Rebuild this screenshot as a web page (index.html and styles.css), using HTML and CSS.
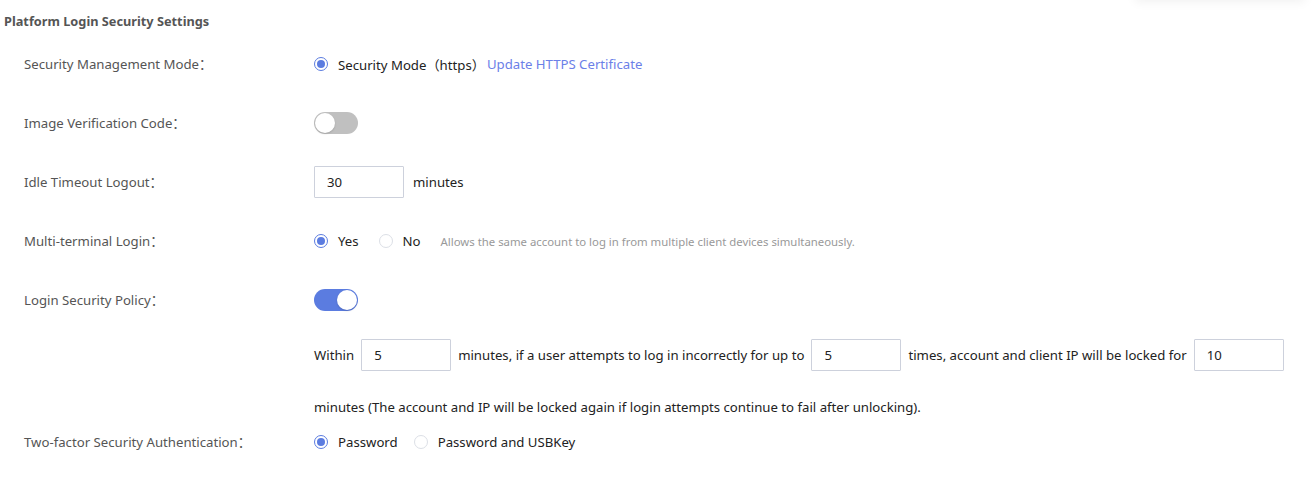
FILE: index.html
```html
<!DOCTYPE html>
<html lang="en">
<head>
<meta charset="utf-8">
<title>Platform Login Security Settings</title>
<link rel="stylesheet" href="styles.css">
</head>
<body>
<div class="top-shadow"></div>
<div class="page">
  <div class="title">Platform Login Security Settings</div>
  <div class="form">
    <div class="item">
      <div class="label">Security Management Mode：</div>
      <div class="content">
        <label class="radio checked"><span class="dot"></span>Security Mode（https）</label>
        <a class="link" href="#">Update HTTPS Certificate</a>
      </div>
    </div>
    <div class="item">
      <div class="label">Image Verification Code：</div>
      <div class="content"><span class="switch"><span class="knob"></span></span></div>
    </div>
    <div class="item">
      <div class="label">Idle Timeout Logout：</div>
      <div class="content">
        <input class="input" value="30">
        <span class="unit">minutes</span>
      </div>
    </div>
    <div class="item">
      <div class="label">Multi-terminal Login：</div>
      <div class="content">
        <label class="radio checked"><span class="dot"></span>Yes</label>
        <label class="radio"><span class="dot"></span>No</label>
        <span class="hint">Allows the same account to log in from multiple client devices simultaneously.</span>
      </div>
    </div>
    <div class="item item-policy">
      <div class="label">Login Security Policy：</div>
      <div class="content-col">
        <div class="content"><span class="switch on"><span class="knob"></span></span></div>
        <div class="lockout">
          <span>Within</span>
          <input class="input" value="5">
          <span>minutes, if a user attempts to log in incorrectly for up to</span>
          <input class="input" value="5">
          <span>times, account and client IP will be locked for</span>
          <input class="input" value="10">
          <span>minutes (The account and IP will be locked again if login attempts continue to fail after unlocking).</span>
        </div>
      </div>
    </div>
    <div class="item">
      <div class="label">Two-factor Security Authentication：</div>
      <div class="content">
        <label class="radio checked tight"><span class="dot"></span>Password</label>
        <label class="radio"><span class="dot"></span>Password and USBKey</label>
      </div>
    </div>
  </div>
</div>
</body>
</html>
```

FILE: styles.css
```css
html, body {
  margin: 0;
  padding: 0;
  background: #fff;
}
body {
  font-family: "Noto Sans", "Noto Sans CJK SC", sans-serif;
  font-size: 13.2px;
  color: #333;
  position: relative;
  overflow: hidden;
  height: 479px;
}
.top-shadow {
  position: absolute;
  top: -40px;
  right: 10px;
  width: 170px;
  height: 40px;
  box-shadow: 0 2px 10px rgba(0, 0, 0, 0.06);
  background: #fff;
}
.page {
  padding: 0 0 0 4px;
}
.title {
  height: 42px;
  line-height: 42px;
  font-weight: 700;
  color: #555;
  font-size: 12.75px;
}
.form {
  padding-top: 6px;
  padding-left: 20px;
}
.item {
  display: flex;
  align-items: flex-start;
  margin-bottom: 27px;
}
.item-policy {
  margin-bottom: 3px;
}
.label {
  width: 290px;
  flex: none;
  line-height: 32px;
  color: #555;
}
.content {
  display: flex;
  align-items: center;
  height: 32px;
  color: #222;
}
.content-col {
  display: flex;
  flex-direction: column;
}
.radio {
  display: inline-flex;
  align-items: center;
  margin-right: 20px;
  cursor: pointer;
}
.radio.tight {
  margin-right: 16px;
}
.dot {
  width: 12px;
  height: 12px;
  border: 1px solid #dcdfe6;
  border-radius: 50%;
  margin-right: 10px;
  position: relative;
  box-sizing: content-box;
}
.radio.checked .dot {
  border-color: #5b7ce0;
}
.radio.checked .dot::after {
  content: "";
  position: absolute;
  left: 2px;
  top: 2px;
  width: 8px;
  height: 8px;
  border-radius: 50%;
  background: #5b7ce0;
}
.link {
  color: #6b80e8;
  text-decoration: none;
  margin-left: -18px;
}
.switch {
  display: inline-block;
  width: 44px;
  height: 22px;
  border-radius: 11px;
  background: #c0c0c0;
  position: relative;
}
.switch .knob {
  position: absolute;
  top: 1px;
  left: 1px;
  width: 20px;
  height: 20px;
  border-radius: 50%;
  background: #fff;
  box-shadow: 0 1px 2px rgba(0, 0, 0, 0.15);
}
.switch.on {
  background: #5b7ce0;
}
.switch.on .knob {
  left: 23px;
}
.input {
  width: 90px;
  height: 32px;
  box-sizing: border-box;
  border: 1px solid #cdd1dc;
  border-radius: 1px;
  padding: 0 12px;
  font-family: inherit;
  font-size: 13.2px;
  color: #222;
  outline: none;
}
.unit {
  margin-left: 9px;
}
.hint {
  font-size: 11.36px;
  color: #999;
}
.lockout {
  display: flex;
  flex-wrap: wrap;
  align-items: center;
  column-gap: 7px;
  row-gap: 20px;
  margin-top: 23px;
  line-height: 32px;
  color: #222;
}
```
